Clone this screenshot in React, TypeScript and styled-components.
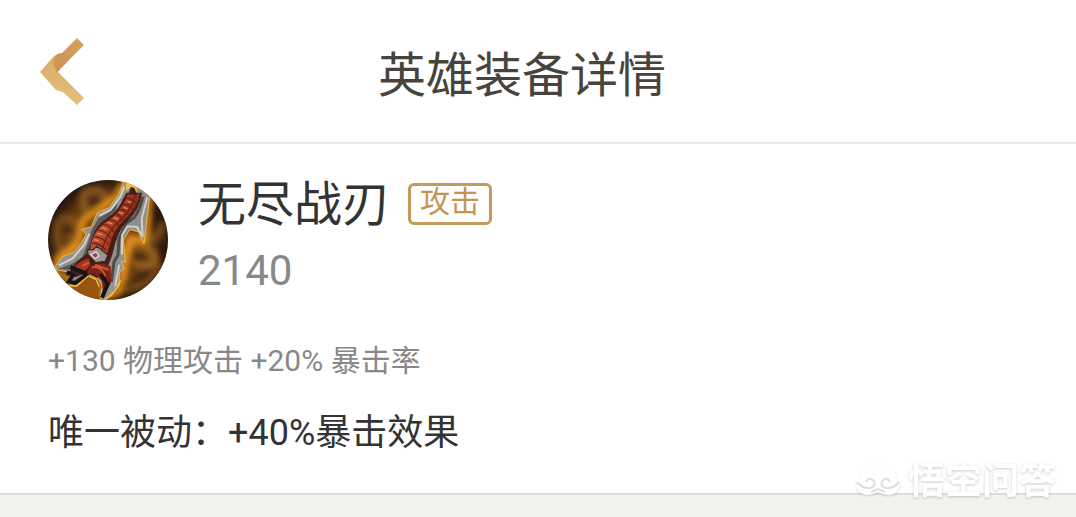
import React from 'react';
import styled, { createGlobalStyle } from 'styled-components';

const Global = createGlobalStyle`
  * { box-sizing: border-box; }
  body {
    margin: 0;
    background: #f2f1ed;
    font-family: Roboto, "Noto Sans CJK SC", sans-serif;
  }
  h1, h2, p { margin: 0; font-weight: 400; }
`;

const Page = styled.div`
  position: relative;
  min-height: 100vh;
`;

const Header = styled.header`
  display: grid;
  grid-template-columns: 128px 1fr 128px;
  align-items: center;
  height: 144px;
  background: #fff;
  border-bottom: 2px solid #e8e8e8;
`;

const BackButton = styled.button`
  display: flex;
  align-items: center;
  height: 100%;
  padding: 2px 0 0 36px;
  border: 0;
  background: none;
  cursor: pointer;
`;

const Title = styled.h1`
  padding: 10px 32px 0 0;
  text-align: center;
  font-size: 48px;
  line-height: 72px;
  color: #48433b;
`;

const Details = styled.main`
  padding: 36px 48px;
  background: #fff;
  border-bottom: 2px solid #dddddb;
`;

const Item = styled.section`
  display: flex;
  gap: 30px;
`;

const Info = styled.div`
  display: flex;
  flex-direction: column;
`;

const NameRow = styled.div`
  display: flex;
  align-items: center;
  gap: 18px;
`;

const Name = styled.h2`
  font-size: 48px;
  line-height: 50px;
  color: #333;
`;

const Tag = styled.span`
  height: 42px;
  margin-bottom: 2px;
  padding: 0 9px;
  border: 3px solid #c69a5f;
  border-radius: 6px;
  font-size: 30px;
  line-height: 32px;
  color: #c69452;
`;

const Price = styled.p`
  padding-top: 17px;
  font-size: 42px;
  line-height: 48px;
  color: #888;
`;

const Stats = styled.p`
  padding-top: 37px;
  font-size: 30px;
  line-height: 48px;
  color: #888;
`;

const Passive = styled.p`
  padding-top: 24px;
  font-size: 36px;
  line-height: 48px;
  color: #333;
`;

const Watermark = styled.div`
  position: absolute;
  top: 452px;
  right: 20px;
  display: flex;
  align-items: center;
  gap: 8px;
  font-family: "Noto Sans CJK SC", sans-serif;
  font-size: 37px;
  font-weight: 700;
  line-height: 52px;
  color: #fff;
  text-shadow: 0 1px 3px rgba(0, 0, 0, 0.2);
`;

const MarkIcon = styled.svg`
  filter: drop-shadow(0 1px 1px rgba(0, 0, 0, 0.16));
`;

function BackIcon() {
  return (
    <svg width="50" height="70" viewBox="0 0 50 70" aria-hidden="true">
      <defs>
        <linearGradient id="lower" x1="0" y1="0" x2="0" y2="1">
          <stop offset="0" stopColor="#d9aa68" />
          <stop offset="1" stopColor="#e6bf7c" />
        </linearGradient>
        <linearGradient id="upper" x1="0" y1="1" x2="1" y2="0">
          <stop offset="0" stopColor="#cd9252" />
          <stop offset="1" stopColor="#d5a062" />
        </linearGradient>
      </defs>
      <path d="M4 35 L18 19 L25 16 L32 24 L22 35 L48 61 L41 68 L27 55 L20 53 Z" fill="url(#lower)" />
      <path d="M41 1 L48 8 L21 35 L18 29 L18 22 L21 17 L26 16 Z" fill="url(#upper)" />
    </svg>
  );
}

function BladeIcon() {
  return (
    <svg width="120" height="120" viewBox="24 24 360 360" role="img" aria-label="无尽战刃">
      <defs>
        <clipPath id="disc"><circle cx="204" cy="204" r="180" /></clipPath>
        <filter id="soft" x="-20%" y="-20%" width="140%" height="140%"><feGaussianBlur stdDeviation="10" /></filter>
        <filter id="fine" x="-20%" y="-20%" width="140%" height="140%"><feGaussianBlur stdDeviation="2" /></filter>
        <radialGradient id="ember">
          <stop offset="0" stopColor="#9a5a14" />
          <stop offset="0.7" stopColor="#643a12" />
          <stop offset="1" stopColor="#2f1a0d" />
        </radialGradient>
        <linearGradient id="steel" x1="0" y1="0" x2="1" y2="1">
          <stop offset="0" stopColor="#b5b3b0" />
          <stop offset="0.5" stopColor="#8b8986" />
          <stop offset="1" stopColor="#a5a4a1" />
        </linearGradient>
        <linearGradient id="grip" x1="0" y1="0" x2="1" y2="0.5">
          <stop offset="0" stopColor="#d8754d" />
          <stop offset="0.5" stopColor="#b44628" />
          <stop offset="1" stopColor="#6b2015" />
        </linearGradient>
      </defs>
      <g clipPath="url(#disc)">
        <rect x="24" y="24" width="360" height="360" fill="url(#ember)" />
        <g fill="none" strokeLinecap="round" filter="url(#soft)">
          <path d="M35 130 Q70 70 120 50 M345 70 L360 170 M300 340 Q350 310 370 230" stroke="#2b170c" strokeWidth="34" />
          <path d="M62 235 C30 165 65 115 105 150 S105 205 72 185" stroke="#8f5a1c" strokeWidth="14" />
          <path d="M140 120 C105 70 155 35 190 65 S175 110 155 88" stroke="#9a6528" strokeWidth="16" />
          <path d="M255 320 C235 230 275 190 325 230 S310 300 280 265" stroke="#a96d22" strokeWidth="18" />
          <path d="M315 205 Q355 205 368 160 M245 350 Q330 350 355 280" stroke="#86521a" strokeWidth="16" />
          <path d="M65 180 Q75 170 90 180 M288 258 Q300 248 304 264 M150 88 L175 90" stroke="#38200f" strokeWidth="20" />
          <path d="M105 215 L50 262" stroke="#c98320" strokeWidth="18" />
        </g>
        <g filter="url(#soft)" fill="none" stroke="#ffa51e" strokeWidth="15">
          <path d="M50 274 L112 220 L128 145 L222 80 L250 36 L330 70 L316 205 L270 200 L252 289 L236 360 L187 381 L165 333 L110 348 L84 320 L46 302 Z" />
        </g>
        <g filter="url(#fine)">
          <path d="M40 291 L66 254 L103 240 L126 211 L138 187 L126 172 L154 164 L172 122 L208 106 L236 67 L250 32 L290 30 L330 67 L322 128 L312 215 L296 180 L270 172 L250 204 L256 270 L244 268 L252 290 L238 300 L238 340 L214 372 L180 388 L186 342 L174 320 L140 308 L107 342 L82 333 L92 302 Z" fill="url(#steel)" stroke="#f5b63c" strokeWidth="3" />
          <path d="M52 292 L95 276 L126 256 L143 216 L154 176 L176 138 L208 121 L232 95 L224 134 L174 183 L148 250 L100 294 Z" fill="#5c5957" />
          <path d="M56 280 L98 259 L132 219 L148 185 M178 131 L212 113 L241 74 L253 44" fill="none" stroke="#d2d0cc" strokeWidth="6" />
          <path d="M309 74 Q298 118 282 137 L260 152 L237 200 L234 250 L222 270 L214 330" fill="none" stroke="#504c49" strokeWidth="9" />
          <path d="M322 76 L305 140 L308 194 L291 165 L262 163 L246 190 L246 248 M238 278 L230 318 L226 343" fill="none" stroke="#cfceca" strokeWidth="6" />
          <path d="M260 62 L306 62 Q300 111 263 147 Q231 178 219 240 Q210 275 190 304 L171 318 L142 302 L105 316 L87 300 L111 269 L140 245 L153 210 Q162 162 205 136 Q237 114 249 80 Z" fill="#4a1c14" />
          <path d="M264 67 L300 64 Q296 104 255 142 Q222 170 210 216 L197 258 L150 244 Q153 178 202 148 Q240 126 264 67 Z" fill="url(#grip)" />
          <g fill="none" stroke="#6d2017" strokeWidth="4">
            <path d="M259 80 Q278 76 291 98 M249 98 Q268 94 280 117 M236 113 Q256 109 267 132 M221 128 Q240 125 250 146 M204 144 Q225 141 235 162 M187 158 Q208 156 221 181 M174 175 Q196 174 213 200 M163 195 Q184 193 205 217 M156 214 Q177 211 198 234" />
            <path d="M286 70 Q274 114 239 147 Q202 176 185 237" />
          </g>
          <g fill="none" stroke="#e58a5c" strokeWidth="4" strokeLinecap="round">
            <path d="M263 88 L273 91 M252 106 L261 110 M238 121 L248 125 M222 137 L233 141 M204 151 L215 155 M187 167 L199 172 M173 184 L186 188 M164 203 L175 206" />
          </g>
          <path d="M143 233 L159 233 L171 223 L204 250 L196 268 L167 272 L143 247 Z" fill="#999491" stroke="#372a29" strokeWidth="4" />
          <path d="M168 239 L177 252 L165 260 L153 248 Z" fill="#9a3f58" stroke="#ded4d4" strokeWidth="4" />
          <path d="M147 259 Q120 266 99 289 L128 303 L151 280 Z" fill="#aa351d" />
          <path d="M152 281 L189 274 L212 283 L213 332 L190 370 L185 326 L163 304 L142 303 Z" fill="#812116" />
          <path d="M156 286 Q184 280 196 313 M165 278 L206 294 M147 271 L127 282" fill="none" stroke="#cc5836" strokeWidth="6" />
          <path d="M91 285 L130 301 L140 309 L105 333 L87 329 L98 309 L80 301 M182 306 L203 337 L186 377" fill="none" stroke="#191515" strokeWidth="12" />
          <path d="M258 20 L258 58 L271 46 L292 60 L288 28 Z" fill="#f4bd46" />
          <path d="M273 45 L283 48 L291 68 L265 67 Z" fill="#3a201a" />
          <path d="M96 345 Q133 330 151 311 Q170 315 178 344 L174 384 Q120 378 82 335 Z" fill="#96570f" />
          <path d="M82 341 L110 342 L145 312 L168 322 L178 345 M192 386 L226 356 L242 325" fill="none" stroke="#ffbf38" strokeWidth="4" />
        </g>
      </g>
    </svg>
  );
}

function WukongMark() {
  return (
    <MarkIcon width="44" height="38" viewBox="0 0 44 38" aria-hidden="true">
      <path d="M3 20 Q5 9 17 5 L22 1 L27 5 Q39 9 41 20 L44 27 Q42 35 34 36 Q27 36 22 33 Q17 36 10 36 Q2 35 0 27 Z" fill="#fff" />
      <path d="M1 23 Q7 30 14 29 Q20 28 18 22 Q13 17 10 23 M43 23 Q37 30 30 29 Q24 28 26 22 Q31 17 34 23 M15 33 L22 30 L29 33" fill="none" stroke="#dededc" strokeWidth="2" />
    </MarkIcon>
  );
}

export default function App() {
  return (
    <Page>
      <Global />
      <Header>
        <BackButton type="button" aria-label="返回"><BackIcon /></BackButton>
        <Title>英雄装备详情</Title>
      </Header>
      <Details>
        <Item>
          <BladeIcon />
          <Info>
            <NameRow>
              <Name>无尽战刃</Name>
              <Tag>攻击</Tag>
            </NameRow>
            <Price>2140</Price>
          </Info>
        </Item>
        <Stats>+130 物理攻击 +20% 暴击率</Stats>
        <Passive>唯一被动：+40%暴击效果</Passive>
      </Details>
      <Watermark><WukongMark />悟空问答</Watermark>
    </Page>
  );
}
